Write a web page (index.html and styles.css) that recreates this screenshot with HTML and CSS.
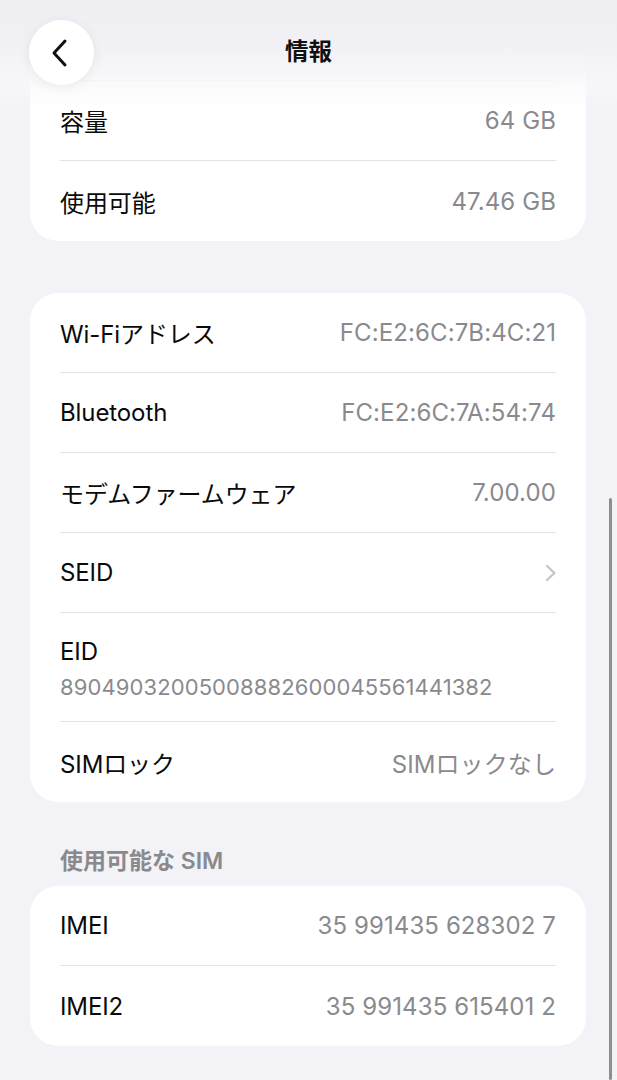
FILE: index.html
```html
<!DOCTYPE html>
<html lang="ja">
<head>
<meta charset="utf-8">
<title>情報</title>
<link rel="stylesheet" href="styles.css">
</head>
<body>
<div class="screen">
  <section class="card card-first">
    <div class="row row-hidden"><span class="label"></span><span class="value"></span></div>
    <div class="row"><span class="label">容量</span><span class="value">64 GB</span></div>
    <div class="row"><span class="label">使用可能</span><span class="value">47.46 GB</span></div>
  </section>

  <section class="card card-second">
    <div class="row"><span class="label">Wi-Fiアドレス</span><span class="value">FC:E2:6C:7B:4C:21</span></div>
    <div class="row"><span class="label">Bluetooth</span><span class="value">FC:E2:6C:7A:54:74</span></div>
    <div class="row"><span class="label">モデムファームウェア</span><span class="value">7.00.00</span></div>
    <div class="row"><span class="label">SEID</span>
      <svg class="chev" width="14" height="20" viewBox="0 0 14 20"><path d="M3 3 L10.5 10 L3 17" fill="none" stroke="#c4c4c7" stroke-width="2.2" stroke-linecap="round" stroke-linejoin="round"/></svg>
    </div>
    <div class="row row-stack"><span class="label">EID</span><span class="value value-sub">89049032005008882600045561441382</span></div>
    <div class="row"><span class="label">SIMロック</span><span class="value">SIMロックなし</span></div>
  </section>

  <h2 class="section-title">使用可能な SIM</h2>
  <section class="card">
    <div class="row"><span class="label">IMEI</span><span class="value">35 991435 628302 7</span></div>
    <div class="row"><span class="label">IMEI2</span><span class="value">35 991435 615401 2</span></div>
  </section>
</div>

<header class="topbar">
  <button class="back" aria-label="戻る">
    <svg width="22" height="30" viewBox="0 0 22 30"><path d="M16 3 L5 15 L16 27" fill="none" stroke="#111" stroke-width="3" stroke-linecap="round" stroke-linejoin="round"/></svg>
  </button>
  <h1 class="title">情報</h1>
</header>

<div class="scrollbar"></div>
</body>
</html>
```

FILE: styles.css
```css
html, body {
  margin: 0;
  padding: 0;
  background: #f2f2f7;
}

body {
  font-family: Inter, "Noto Sans CJK JP", sans-serif;
  color: #000;
  width: 617px;
  height: 1080px;
  overflow: hidden;
  position: relative;
}

.screen {
  padding: 1px 31px 0 30px;
  display: flex;
  flex-direction: column;
}

.card {
  background: #fff;
  border-radius: 28px;
  display: flex;
  flex-direction: column;
}

.card-second {
  margin-top: 52px;
}

.row {
  height: 80px;
  margin: 0 30px;
  display: flex;
  align-items: center;
  justify-content: space-between;
  border-bottom: 1px solid #e2e2e6;
  box-sizing: border-box;
}

.row:last-child {
  border-bottom: none;
}

.row-hidden {
  border-bottom-color: #f0f0f2;
}

.label {
  font-size: 24px;
  letter-spacing: -0.1px;
  white-space: nowrap;
  color: #0a0a0a;
}

.value {
  font-size: 24px;
  color: #8a8a8e;
  letter-spacing: 0.1px;
  white-space: nowrap;
}

.chev {
  margin-right: -2px;
}

.row-stack {
  height: 109px;
  flex-direction: column;
  align-items: flex-start;
  justify-content: flex-start;
  padding-top: 24px;
  gap: 6px;
}

.row-stack .label {
  line-height: 30px;
}

.value-sub {
  font-size: 22px;
  line-height: 28px;
  letter-spacing: 0.1px;
}

.section-title {
  margin: 0;
  padding: 44px 30px 10px;
  font-size: 23px;
  line-height: 30px;
  font-weight: 600;
  color: #8a8a8e;
}

.topbar {
  position: absolute;
  top: 0;
  left: 0;
  width: 617px;
  height: 112px;
  background: linear-gradient(to bottom,
    rgba(238, 238, 243, 1) 0px,
    rgba(241, 241, 245, 0.97) 45px,
    rgba(246, 246, 249, 0.88) 72px,
    rgba(250, 250, 252, 0.6) 92px,
    rgba(255, 255, 255, 0) 112px);
}

.title {
  position: absolute;
  top: 36px;
  left: 0;
  right: 0;
  margin: 0;
  text-align: center;
  font-size: 23.5px;
  line-height: 32px;
  font-weight: 700;
  color: #111;
}

.back {
  position: absolute;
  left: 29px;
  top: 20px;
  width: 65px;
  height: 65px;
  border-radius: 50%;
  border: none;
  padding: 0;
  background: rgba(255, 255, 255, 0.96);
  box-shadow: 0 2px 12px rgba(0, 0, 0, 0.07);
  display: flex;
  align-items: center;
  justify-content: center;
}

.back svg {
  margin-left: -4px;
}

.scrollbar {
  position: absolute;
  left: 609px;
  top: 498px;
  width: 3px;
  height: 582px;
  border-radius: 2px;
  background: #8e8e92;
}
```
